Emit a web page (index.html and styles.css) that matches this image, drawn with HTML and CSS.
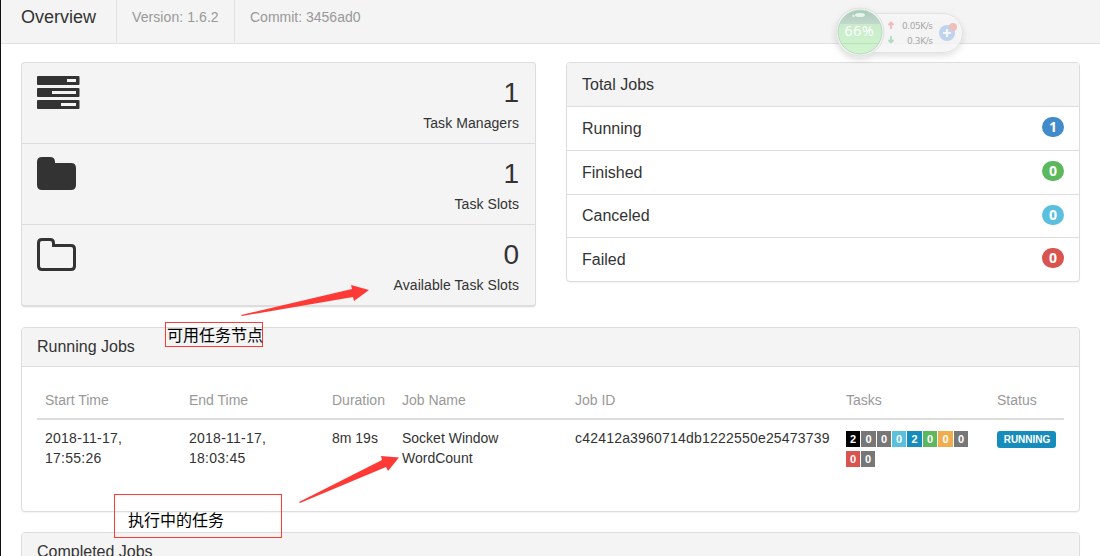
FILE: index.html
```html
<!DOCTYPE html>
<html lang="en">
<head>
<meta charset="utf-8">
<title>Overview</title>
<link rel="stylesheet" href="styles.css">
</head>
<body>
<header class="navbar">
  <h1 class="nav-title">Overview</h1>
  <span class="nav-item">Version: 1.6.2</span>
  <span class="nav-item commit">Commit: 3456ad0</span>
</header>
<main class="content">
  <div class="summary">
    <section class="panel stats">
      <div class="stat">
        <svg class="icon" width="43" height="34" viewBox="0 0 43 34" fill="#333" fill-rule="evenodd">
          <path d="M1 0H41.500Q42.500 0 42.500 1V8Q42.500 9 41.500 9H1Q0 9 0 8V1Q0 0 1 0ZM30 3V6H39V3ZM1 12H41.500Q42.500 12 42.500 13V20Q42.500 21 41.500 21H1Q0 21 0 20V13Q0 12 1 12ZM15 15V18H39V15ZM1 24H41.500Q42.500 24 42.500 25V32Q42.500 33 41.500 33H1Q0 33 0 32V25Q0 24 1 24ZM24 27V30H39V27Z"/>
        </svg>
        <div class="figure"><div class="number">1</div><div class="caption">Task Managers</div></div>
      </div>
      <div class="stat">
        <svg class="icon" width="43" height="34" viewBox="0 0 43 34" fill="#333">
          <path d="M5 0H13Q18 0 18 5V6H34Q39 6 39 11V28Q39 33 34 33H5Q0 33 0 28V5Q0 0 5 0Z"/>
        </svg>
        <div class="figure"><div class="number">1</div><div class="caption">Task Slots</div></div>
      </div>
      <div class="stat">
        <svg class="icon" width="43" height="34" viewBox="0 0 43 34" fill="none" stroke="#333" stroke-width="3">
          <path d="M5 1.5H13Q16.500 1.5 16.500 5V7.5H34Q37.500 7.5 37.500 11V28Q37.500 31.5 34 31.5H5Q1.5 31.5 1.5 28V5Q1.5 1.5 5 1.5Z"/>
        </svg>
        <div class="figure"><div class="number">0</div><div class="caption">Available Task Slots</div></div>
      </div>
    </section>
    <section class="panel totals">
      <h2 class="total heading">Total Jobs</h2>
      <div class="total">Running<span class="badge blue">1</span></div>
      <div class="total">Finished<span class="badge green">0</span></div>
      <div class="total short">Canceled<span class="badge sky">0</span></div>
      <div class="total">Failed<span class="badge red">0</span></div>
    </section>
  </div>
  <section class="panel running">
    <h2 class="panel-title">Running Jobs</h2>
    <table class="jobs">
      <colgroup><col class="c-start"><col class="c-end"><col class="c-duration"><col class="c-name"><col class="c-id"><col class="c-tasks"><col class="c-status"></colgroup>
      <thead><tr><th>Start Time</th><th>End Time</th><th>Duration</th><th>Job Name</th><th>Job ID</th><th>Tasks</th><th>Status</th></tr></thead>
      <tbody><tr>
        <td class="time">2018-11-17,<br>17:55:26</td>
        <td class="time">2018-11-17,<br>18:03:45</td>
        <td>8m 19s</td>
        <td>Socket Window<br>WordCount</td>
        <td class="job-id">c42412a3960714db1222550e25473739</td>
        <td><div class="tasks"><span class="task black">2</span><span class="task wide">0</span><span class="task">0</span><span class="task sky">0</span><span class="task ocean wide">2</span><span class="task green">0</span><span class="task orange wide">0</span><span class="task">0</span></div><div class="tasks"><span class="task red">0</span><span class="task">0</span></div></td>
        <td><span class="status">RUNNING</span></td>
      </tr></tbody>
    </table>
  </section>
  <section class="panel completed"><h2 class="panel-title">Completed Jobs</h2></section>
</main>
<div class="note note-slots">可用任务节点</div>
<div class="note note-job">执行中的任务</div>
<svg class="arrows" width="1100" height="556" viewBox="0 0 1100 556" fill="#fd3a36">
  <path d="M241 315L352 289L351 285L369 290L354 301L353 297L242 316Z"/>
  <path d="M299 502L382 460L381 456L399 457.500L388 471L386 467L300 503Z"/>
</svg>
<div class="monitor">
  <svg width="140" height="64" viewBox="0 0 140 64">
    <defs>
      <filter id="soft" x="-20%" y="-20%" width="140%" height="160%"><feDropShadow dx="0" dy="3" stdDeviation="3" flood-opacity=".14"/></filter>
      <clipPath id="dome"><circle cx="30" cy="32" r="22"/></clipPath>
      <linearGradient id="cap" x2="0" y2="1"><stop stop-color="#a9cbbb"/><stop offset="1" stop-color="#c3d8cd"/></linearGradient>
      <linearGradient id="liquid" x2="0" y2="1"><stop stop-color="#c9ebcb"/><stop offset="1" stop-color="#d0f5cf"/></linearGradient>
    </defs>
    <g filter="url(#soft)">
      <rect x="20" y="13.500" width="112.500" height="39" rx="19.500" fill="#f7f7f7" fill-opacity=".8" stroke="#e2e2e2"/>
      <circle cx="30" cy="32" r="24" fill="#f5f5f5" stroke="#dedede"/>
    </g>
    <g clip-path="url(#dome)"><rect x="8" y="10" width="44" height="14" fill="url(#cap)"/><rect x="8" y="24" width="44" height="30" fill="url(#liquid)"/><path d="M8 43.500H52" stroke="#bddfbe"/><ellipse cx="30" cy="15" rx="5" ry="2" fill="#e8f4ee"/><circle cx="23.500" cy="16" r="1.200" fill="#e8f4ee"/></g>
    <circle cx="30" cy="32" r="22" fill="none" stroke="#b5d9c1"/>
    <path d="M61 29V22M58.500 25L61 22.500L63.500 25" fill="none" stroke="#f5b9b5" stroke-width="1.800"/>
    <path d="M61 36V43M58.500 40L61 42.500L63.500 40" fill="none" stroke="#afdcc0" stroke-width="1.800"/>
    <circle cx="117" cy="33" r="8" fill="#bfd2ee"/>
    <path d="M117 29V37M113 33H121" stroke="#f4f7fb" stroke-width="2.200"/>
    <circle cx="123" cy="27" r="4" fill="#efbfbc"/>
    <text class="percent" x="14.500" y="36" textLength="29">66%</text>
    <text class="speed" x="72" y="28.500" textLength="31">0.05K/s</text>
    <text class="speed" x="77" y="43.500" textLength="26">0.3K/s</text>
  </svg>
</div>
</body>
</html>
```

FILE: styles.css
```css
* { box-sizing: border-box; }
body {
  margin: 0;
  height: 556px;
  overflow: hidden;
  position: relative;
  border-left: 1px solid #111;
  background: #fff;
  color: #333;
  font: 14px/20px "Liberation Sans", Arial, sans-serif;
}
h1, h2 { margin: 0; font-weight: normal; }
.navbar {
  display: flex;
  height: 44px;
  padding-left: 20px;
  background: #f4f4f4;
  border-bottom: 1px solid #e1e1e1;
}
.nav-title { width: 95px; padding-top: 7px; font-size: 18px; line-height: 20px; }
.nav-item {
  width: 118px;
  height: 42px;
  padding: 7px 0 0 15px;
  border-left: 1px solid #e1e1e1;
  color: #999;
  letter-spacing: .08px;
}
.nav-item.commit { width: 160px; letter-spacing: 0; }
.content { padding: 18px 20px 0; }
.summary { display: flex; gap: 30px; align-items: flex-start; height: 265px; }
.panel {
  border: 1px solid #ddd;
  border-radius: 4px;
  background: #fff;
  box-shadow: 0 1px 1px rgba(0, 0, 0, .05);
  overflow: hidden;
}
.stats { width: 515px; height: 245px; border-bottom-width: 2px; background: #f4f4f4; }
.stat { display: flex; justify-content: space-between; height: 81px; padding: 13px 16px 0 15px; border-bottom: 1px solid #ddd; }
.stat:last-child { border-bottom: 0; }
.icon { display: block; }
.figure { text-align: right; }
.number { font-size: 28px; line-height: 34px; margin-bottom: 3px; }
.caption { letter-spacing: .07px; }
.totals { width: 514px; height: 220px; }
.total {
  display: flex;
  align-items: center;
  justify-content: space-between;
  height: 44px;
  padding: 0 15px;
  border-bottom: 1px solid #ddd;
  font-size: 16px;
}
.total:last-child { border-bottom: 0; }
.total.short { height: 43px; }
.heading { background: #f4f4f4; }
.badge {
  align-self: flex-start;
  width: 22px;
  height: 20px;
  margin-top: 10px;
  border-radius: 10px;
  color: #fff;
  font: bold 14px/20px "Open Sans", sans-serif;
  text-align: center;
}
.blue { background: #428bca; }
.badge.green, .task.green { background: #5cb85c; }
.badge.sky, .task.sky { background: #5bc0de; }
.badge.red, .task.red { background: #d9534f; }
.running { height: 185px; }
.completed { height: 60px; margin-top: 20px; }
.panel-title {
  height: 39px;
  padding: 0 15px;
  background: #f4f4f4;
  border-bottom: 1px solid #ddd;
  font-size: 16px;
  line-height: 38px;
}
.jobs { width: 1027px; margin: 14px 0 0 15px; border-collapse: collapse; table-layout: fixed; }
.c-start { width: 144px; }
.c-end { width: 143px; }
.c-duration { width: 70px; }
.c-name { width: 173px; }
.c-id { width: 271px; }
.c-tasks { width: 151px; }
.c-status { width: 75px; }
.jobs th {
  height: 38px;
  padding: 0 0 0 8px;
  border-bottom: 2px solid #ddd;
  color: #999;
  font-weight: normal;
  text-align: left;
  white-space: nowrap;
}
.jobs td { padding: 8px 0 0 8px; vertical-align: top; white-space: nowrap; }
.jobs .time { letter-spacing: .25px; }
.jobs .job-id { letter-spacing: .2px; }
.tasks { display: flex; height: 20px; gap: 1px; padding-top: 3px; }
.task {
  width: 14px;
  height: 16px;
  background: #777;
  color: #fff;
  font: bold 11px/16px "Liberation Sans", Arial, sans-serif;
  text-align: center;
}
.task.wide { width: 15px; }
.task.black { background: #000; }
.task.ocean { background: #168cbc; }
.task.orange { background: #f0ad4e; }
.status {
  display: block;
  width: 59px;
  height: 17px;
  margin-top: 3px;
  padding-left: 1px;
  border-radius: 3px;
  background: #168cbc;
  color: #fff;
  font: bold 10px/17px "Liberation Sans", Arial, sans-serif;
  text-align: center;
}
.note {
  position: absolute;
  border: 1px solid #fd3a36;
  color: #000;
  font: 16px/22px "Noto Sans CJK SC", sans-serif;
  white-space: nowrap;
}
.note-slots { left: 164px; top: 322px; width: 98px; height: 25px; padding-left: 1px; }
.note-job { left: 113px; top: 494px; width: 168px; height: 44px; padding: 13px 0 0 13px; }
.arrows { position: absolute; left: -1px; top: 0; }
.monitor { position: absolute; left: 829px; top: 0; }
.percent { fill: #fff; font: 14px "Open Sans", sans-serif; }
.speed { fill: #a8a8a8; font: 9px "DejaVu Sans", sans-serif; }
```
